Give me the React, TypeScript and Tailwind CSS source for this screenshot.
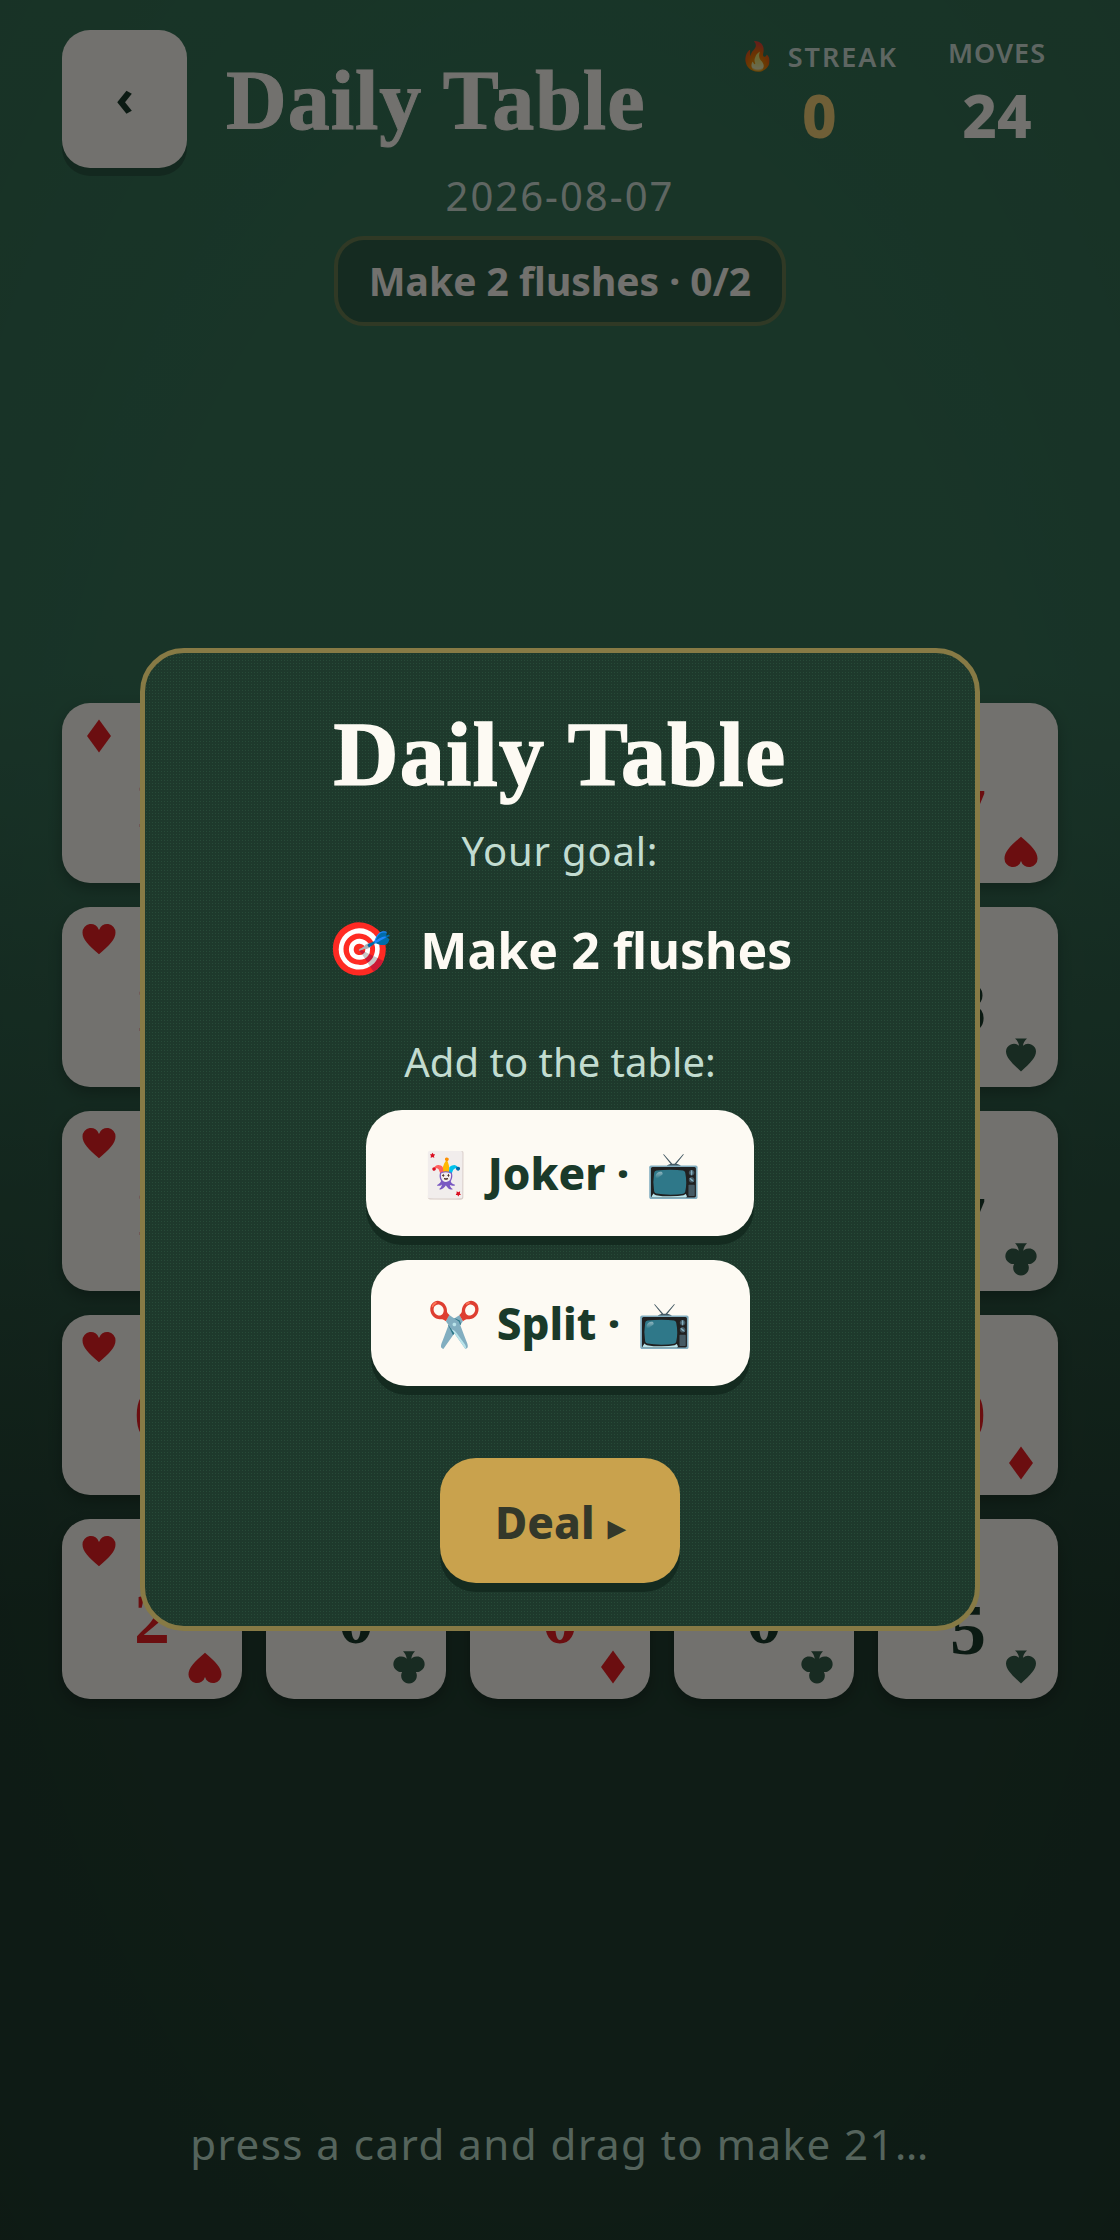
const SUITS: Record<string, { d: string; red: boolean }> = {
  H: { d: "M12 21.5C5 15.5 1 11.5 1 7a5.6 5.6 0 0 1 11-1.6A5.6 5.6 0 0 1 23 7c0 4.5-4 8.500-11 14.500Z", red: true },
  D: { d: "M12 1 20 12 12 23 4 12Z", red: true },
  C: { d: "M12 1a5.200 5.200 0 0 1 4.600 7.700A5.200 5.200 0 1 1 13.500 17.500c.3 2 1 3.500 2.500 5H8c1.500-1.500 2.200-3 2.500-5A5.200 5.200 0 1 1 7.400 8.700 5.200 5.200 0 0 1 12 1Z", red: false },
  S: { d: "M12 1c6.500 6 10 9.500 10 13.500a5.200 5.200 0 0 1-8.700 3.600c.3 2 1 3.400 2.700 4.900H8c1.700-1.500 2.400-2.900 2.700-4.900A5.200 5.200 0 0 1 2 14.500C2 10.500 5.500 7 12 1Z", red: false },
};

const CARDS: [string, string][] = [
  ["D", "1"], ["S", "9"], ["H", "4"], ["C", "3"], ["H", "7"],
  ["H", "1"], ["H", "5"], ["D", "3"], ["C", "2"], ["S", "8"],
  ["H", "1"], ["C", "4"], ["D", "9"], ["S", "2"], ["C", "7"],
  ["H", "0"], ["D", "2"], ["S", "6"], ["H", "3"], ["D", "0"],
  ["H", "2"], ["C", "0"], ["D", "0"], ["C", "0"], ["S", "5"],
];

function Suit({ s, className }: { s: string; className: string }) {
  return (
    <svg viewBox="0 0 24 24" className={className} fill={SUITS[s].red ? "#ee2024" : "#36604c"}>
      <path d={SUITS[s].d} />
    </svg>
  );
}

function Card({ s, r }: { s: string; r: string }) {
  const red = SUITS[s].red;
  const drop = r === "5" || r === "7";
  return (
    <div className="relative flex h-[180px] items-center justify-center rounded-[28px] bg-[#fdfaf3] shadow-[0_6px_14px_rgba(0,0,0,0.25)]">
      <Suit s={s} className="absolute left-[19px] top-[15px] h-[36px] w-[36px]" />
      <span
        className={`font-['Liberation_Serif',serif] text-[72px] font-bold leading-none ${drop ? "pt-[42px]" : "pt-[20px]"} ${red ? "text-[#ee2024]" : "text-[#1a3a2a]"}`}
      >
        {r}
      </span>
      <Suit s={s} className="absolute bottom-[14px] right-[19px] h-[36px] w-[36px] rotate-180" />
    </div>
  );
}

function Emoji({ c, className }: { c: string; className: string }) {
  return <span className={`font-['Noto_Color_Emoji',sans-serif] ${className}`}>{c}</span>;
}

export default function App() {
  return (
    <div className="relative h-[2240px] w-[1120px] overflow-hidden bg-[radial-gradient(ellipse_at_center,transparent_60%,rgba(0,0,0,0.06)_100%),linear-gradient(to_bottom,#38775a_0%,#38745a_30%,#223f31_72%,#223f31_100%)] font-['Noto_Sans',sans-serif]">
      <div className="flex items-start px-[62px] pt-[30px]">
        <button className="flex h-[138px] w-[125px] items-center justify-center rounded-[28px] bg-[#fdfaf3] pb-[4px] text-[50px] font-bold text-[#1a3a2a] shadow-[0_8px_0_#2c5a45]">
          ‹
        </button>
        <h1 className="ml-[39px] mt-[25px] font-['Liberation_Serif',serif] text-[84px] font-bold leading-[92px] tracking-[1px] text-[#fdfaf3] [-webkit-text-stroke:1px_#fdfaf3]">
          Daily Table
        </h1>
        <div className="ml-auto mr-[12px] flex gap-[50px] text-center">
          <div className="mt-[9px] flex flex-col items-center">
            <div className="flex items-center text-[27px] font-semibold leading-[36px] tracking-[2px] text-[#e8f2ec]/90">
              <Emoji c="🔥" className="mr-[10px] text-[28px]" />
              STREAK
            </div>
            <div className="mt-[10px] text-[60px] font-extrabold leading-[60px] text-[#f5d27a]">0</div>
          </div>
          <div className="mt-[5px] flex flex-col items-center">
            <div className="text-[27px] font-semibold leading-[36px] tracking-[1px] text-[#e8f2ec]/90">MOVES</div>
            <div className="mt-[14px] text-[60px] font-extrabold leading-[60px] text-[#fdfaf3]">24</div>
          </div>
        </div>
      </div>
      <div className="text-center text-[40px] leading-[56px] tracking-[2px] text-[#e8f2ec]/90">2026-08-07</div>
      <div className="mt-[12px] flex justify-center">
        <div className="flex h-[90px] w-[452px] items-center justify-center rounded-[30px] border-[4px] border-[#6a7f52] bg-[#2f6049] text-[39px] font-bold text-[#fdfaf3]">
          Make 2 flushes · 0/2
        </div>
      </div>
      <div className="mt-[377px] grid grid-cols-5 gap-[24px] px-[62px]">
        {CARDS.map(([s, r], i) => (
          <Card key={i} s={s} r={r} />
        ))}
      </div>
      <div className="absolute bottom-[71px] left-0 right-0 text-center text-[42px] leading-[50px] tracking-[1.5px] text-[#bddecc]">
        press a card and drag to make 21…
      </div>

      <div className="absolute inset-0 bg-black/55" />

      <div className="absolute left-[140px] top-[648px] flex h-[983px] w-[840px] flex-col items-center rounded-[44px] border-[5px] border-[#877a45] bg-[#1e392c] bg-[radial-gradient(#274a38_0.7px,transparent_0.9px)] bg-[length:3px_3px] pt-[52px]">
        <h2 className="font-['Liberation_Serif',serif] text-[90px] font-bold leading-[100px] tracking-[1.4px] text-[#fdfaf3] [-webkit-text-stroke:1.5px_#fdfaf3]">
          Daily Table
        </h2>
        <p className="mt-[18px] text-[40px] leading-[56px] tracking-[0.8px] text-[#c2dcd0]">Your goal:</p>
        <div className="mt-[37px] flex items-center text-[50px] font-bold leading-[68px] text-[#fdfaf3]">
          <Emoji c="🎯" className="mr-[28px] text-[52px]" />
          Make 2 flushes
        </div>
        <p className="mt-[50px] text-[40px] leading-[56px] text-[#c2dcd0]">Add to the table:</p>
        <button className="mt-[20px] h-[126px] w-[388px] rounded-[36px] bg-[#fdfaf3] text-[44px] font-extrabold leading-[126px] text-[#1a3a2a] shadow-[0_9px_0_#142b20]">
          <Emoji c="🃏" className="mr-[3px]" /> Joker · <Emoji c="📺" className="ml-[6px]" />
        </button>
        <button className="mt-[24px] h-[126px] w-[379px] rounded-[36px] bg-[#fdfaf3] text-[44px] font-extrabold leading-[126px] text-[#1a3a2a] shadow-[0_9px_0_#142b20]">
          <Emoji c="✂️" className="mr-[3px]" /> Split · <Emoji c="📺" className="ml-[6px]" />
        </button>
        <button className="mt-[72px] h-[125px] w-[240px] rounded-[36px] bg-[#c9a24d] pt-[3px] text-[44px] font-extrabold leading-[122px] text-[#33382a] shadow-[0_9px_0_#142b20]">
          Deal <span className="ml-[2px] text-[34px]">▸</span>
        </button>
      </div>
    </div>
  );
}
